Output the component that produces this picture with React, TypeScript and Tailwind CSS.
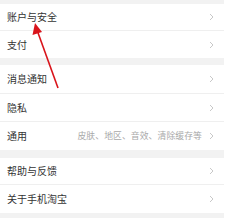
const Chevron = () => (
  <svg width="5" height="8" viewBox="0 0 5 8" className="shrink-0">
    <path d="M1 1 L4 4 L1 7" fill="none" stroke="#c8c8c8" strokeWidth="1" />
  </svg>
);

type RowProps = { label: string; hint?: string; h: string; line?: boolean };

const Row = ({ label, hint, h, line }: RowProps) => (
  <div
    className={`flex items-center pl-[7px] pr-[10px] ${h} ${
      line ? "border-b border-[#efefef]" : ""
    }`}
  >
    <span className="text-[10px] text-[#333] leading-none">{label}</span>
    <div className="flex-1" />
    {hint && (
      <span className="text-[8.8px] text-[#a8a8a8] leading-none mr-[7px] tracking-[0.1px]">
        {hint}
      </span>
    )}
    <Chevron />
  </div>
);

export default function App() {
  return (
    <div
      className="relative w-[231px] h-[218px] bg-white overflow-hidden"
      style={{ fontFamily: '"Noto Sans CJK SC", "Noto Sans", sans-serif' }}
    >
      <div className="w-[224px] flex flex-col">
        <div className="h-[4px] bg-[#f2f2f2]" />
        <Row label="账户与安全" h="h-[27px]" line />
        <Row label="支付" h="h-[27px]" />
        <div className="h-[7px] bg-[#f2f2f2]" />
        <Row label="消息通知" h="h-[29px]" line />
        <Row label="隐私" h="h-[28px]" line />
        <Row label="通用" hint="皮肤、地区、音效、清除缓存等" h="h-[28px]" />
        <div className="h-[8px] bg-[#f2f2f2]" />
        <Row label="帮助与反馈" h="h-[27px]" line />
        <Row label="关于手机淘宝" h="h-[28px]" />
        <div className="h-[5px] bg-[#f2f2f2]" />
      </div>

      {/* red arrow pointing at 账户与安全 */}
      <svg
        className="absolute left-0 top-0 pointer-events-none"
        width="231"
        height="218"
        viewBox="0 0 231 218"
      >
        <line x1="58" y1="88" x2="37" y2="30" stroke="#d9141b" strokeWidth="1.6" />
        <polygon points="35,23 32.5,35 42,32" fill="#d9141b" />
      </svg>
    </div>
  );
}
